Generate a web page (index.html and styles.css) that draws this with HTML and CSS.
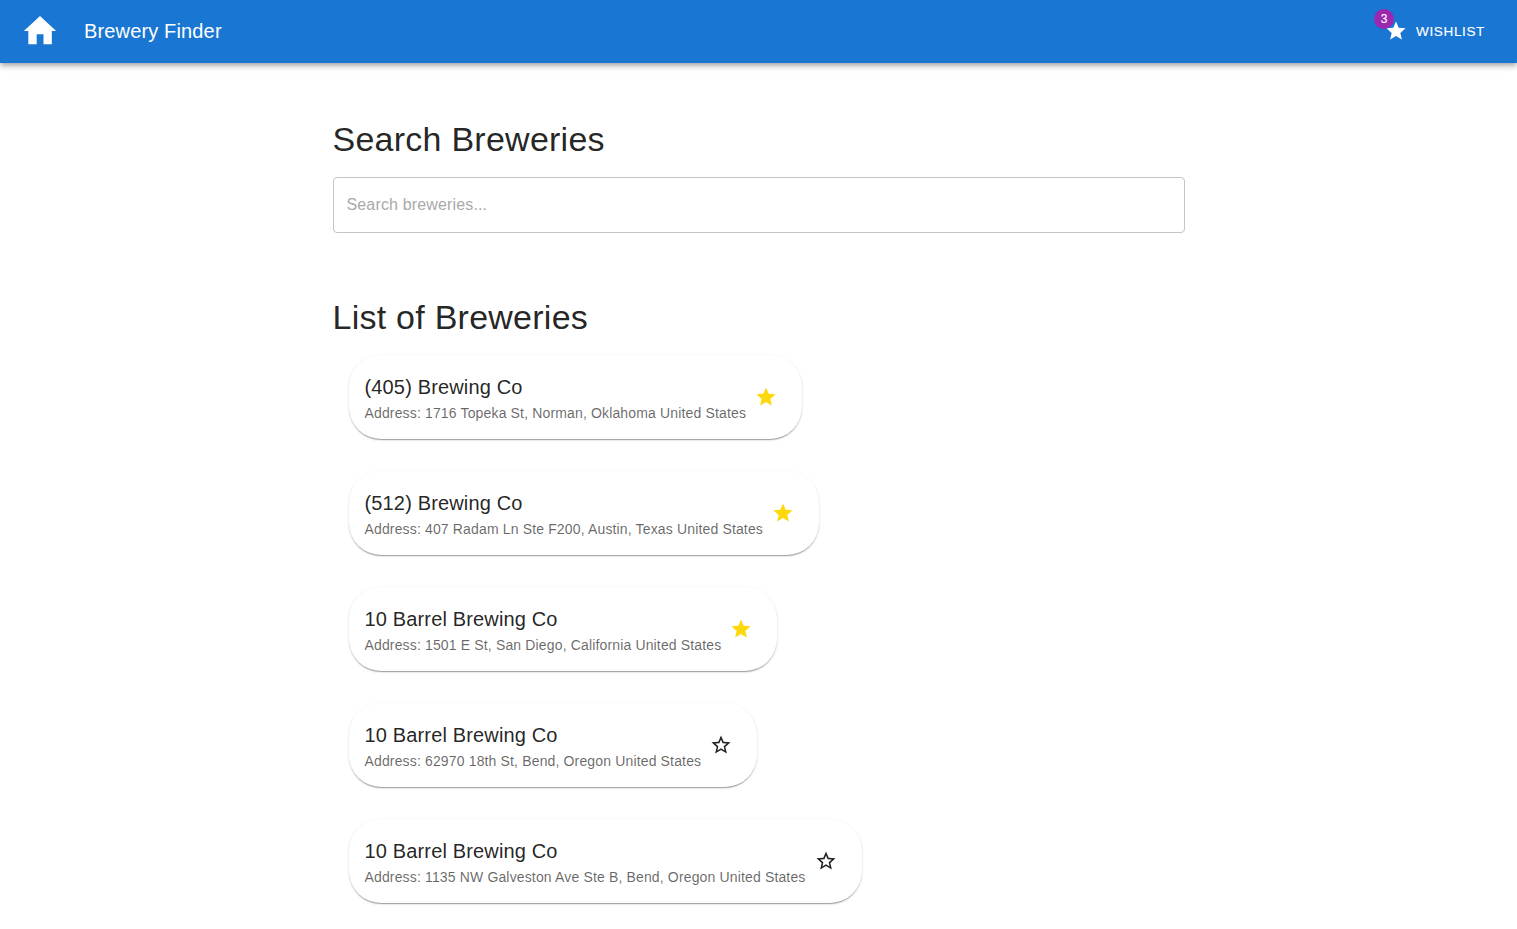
FILE: index.html
```html
<!DOCTYPE html>
<html lang="en">
<head>
<meta charset="utf-8">
<title>Brewery Finder</title>
<link rel="stylesheet" href="styles.css">
</head>
<body>
<header class="appbar">
  <svg class="home" viewBox="0 0 24 24"><path d="M10 20H5v-8H2.3L12 3l9.7 9H19.1v8h-5v-6H10z"/></svg>
  <span class="brand">Brewery Finder</span>
  <a class="wishlist"><span class="badge-wrap"><svg class="icon" viewBox="-.6 -.6 25.2 25.2"><path d="M12 17.27 18.18 21l-1.64-7.03L22 9.24l-7.19-.61L12 2 9.19 8.63 2 9.24l5.46 4.73L5.82 21z"/></svg><span class="badge">3</span></span><span class="wishlist-label">WISHLIST</span></a>
</header>
<main class="container">
  <h1 class="heading">Search Breweries</h1>
  <input class="search" type="text" placeholder="Search breweries...">
  <h2 class="heading list-heading">List of Breweries</h2>
  <ul class="list">
    <li class="card"><div class="info"><h3 class="name">(405) Brewing Co</h3><p class="address">Address: 1716 Topeka St, Norman, Oklahoma United States</p></div><svg class="star gold" viewBox="-.6 -.6 25.2 25.2"><path d="M12 17.27 18.18 21l-1.64-7.03L22 9.24l-7.19-.61L12 2 9.19 8.63 2 9.24l5.46 4.73L5.82 21z"/></svg></li>
    <li class="card"><div class="info"><h3 class="name">(512) Brewing Co</h3><p class="address">Address: 407 Radam Ln Ste F200, Austin, Texas United States</p></div><svg class="star gold" viewBox="-.6 -.6 25.2 25.2"><path d="M12 17.27 18.18 21l-1.64-7.03L22 9.24l-7.19-.61L12 2 9.19 8.63 2 9.24l5.46 4.73L5.82 21z"/></svg></li>
    <li class="card"><div class="info"><h3 class="name">10 Barrel Brewing Co</h3><p class="address">Address: 1501 E St, San Diego, California United States</p></div><svg class="star gold" viewBox="-.6 -.6 25.2 25.2"><path d="M12 17.27 18.18 21l-1.64-7.03L22 9.24l-7.19-.61L12 2 9.19 8.63 2 9.24l5.46 4.73L5.82 21z"/></svg></li>
    <li class="card"><div class="info"><h3 class="name">10 Barrel Brewing Co</h3><p class="address">Address: 62970 18th St, Bend, Oregon United States</p></div><svg class="star" viewBox="-.6 -.6 25.2 25.2"><path d="m22 9.24-7.19-.62L12 2 9.19 8.63 2 9.24l5.46 4.73L5.82 21 12 17.27 18.18 21l-1.63-7.03zM12 15.4l-3.76 2.27 1-4.28-3.32-2.88 4.38-.38L12 6.1l1.71 4.04 4.38.38-3.32 2.88 1 4.28z"/></svg></li>
    <li class="card"><div class="info"><h3 class="name">10 Barrel Brewing Co</h3><p class="address">Address: 1135 NW Galveston Ave Ste B, Bend, Oregon United States</p></div><svg class="star" viewBox="-.6 -.6 25.2 25.2"><path d="m22 9.24-7.19-.62L12 2 9.19 8.63 2 9.24l5.46 4.73L5.82 21 12 17.27 18.18 21l-1.63-7.03zM12 15.4l-3.76 2.27 1-4.28-3.32-2.88 4.38-.38L12 6.1l1.71 4.04 4.38.38-3.32 2.88 1 4.28z"/></svg></li>
  </ul>
</main>
</body>
</html>
```
FILE: styles.css
```css
* { box-sizing: border-box; }
body { margin: 0; height: 929px; overflow: hidden; background: #fff; color: rgba(0,0,0,.87); font-family: "Liberation Sans", Arial, sans-serif; }
svg { display: block; fill: currentColor; }
.appbar { position: relative; display: flex; align-items: center; height: 63px; padding: 0 32px 1px 20px; background: #1976d2; color: #fff; box-shadow: 0 2px 4px -1px rgba(0,0,0,.2), 0 4px 5px rgba(0,0,0,.14), 0 1px 10px rgba(0,0,0,.12); }
.home { width: 40px; height: 40px; margin-top: -1px; }
.brand { margin-left: 24px; font-size: 20px; line-height: 32px; letter-spacing: .15px; }
.wishlist { display: flex; align-items: center; gap: 8px; margin-left: auto; font-size: 13.6px; letter-spacing: .6px; }
.wishlist-label { -webkit-text-stroke: .12px currentColor; }
.badge-wrap { position: relative; }
.icon { width: 24px; height: 24px; }
.badge { position: absolute; left: -10px; top: -10px; width: 20px; height: 20px; border-radius: 10px; background: #9c27b0; font-size: 12px; line-height: 20px; text-align: center; letter-spacing: 0; -webkit-text-stroke: .1px currentColor; }
.container { width: 852px; margin: 0 auto; padding-top: 55px; }
.heading { margin: 0; font-size: 34px; line-height: 42px; font-weight: 400; letter-spacing: .25px; }
.search { display: block; width: 852px; height: 56px; margin-top: 17px; padding: 0 13px; border: 1px solid #c4c4c4; border-radius: 4px; font: 16px "Liberation Sans", Arial, sans-serif; letter-spacing: .15px; }
.search::placeholder { color: #a9a9a9; opacity: 1; }
.list-heading { margin-top: 63px; }
.list { display: flex; flex-direction: column; align-items: flex-start; gap: 32px; margin: 0; padding: 17px 16px 0; list-style: none; }
.card { display: flex; align-items: center; gap: 8px; height: 84px; padding: 0 24px 0 16px; border-radius: 32px; box-shadow: 0 2px 1px -1px rgba(0,0,0,.2), 0 1px 1px rgba(0,0,0,.14), 0 1px 3px rgba(0,0,0,.12); }
.name { margin: 0; font-size: 20px; line-height: 32px; font-weight: 400; letter-spacing: .15px; }
.address { margin: 0; font-size: 14px; line-height: 20px; letter-spacing: .15px; color: rgba(0,0,0,.6); white-space: nowrap; }
.star { width: 24px; height: 24px; }
.gold { color: #fdd80b; }
```
